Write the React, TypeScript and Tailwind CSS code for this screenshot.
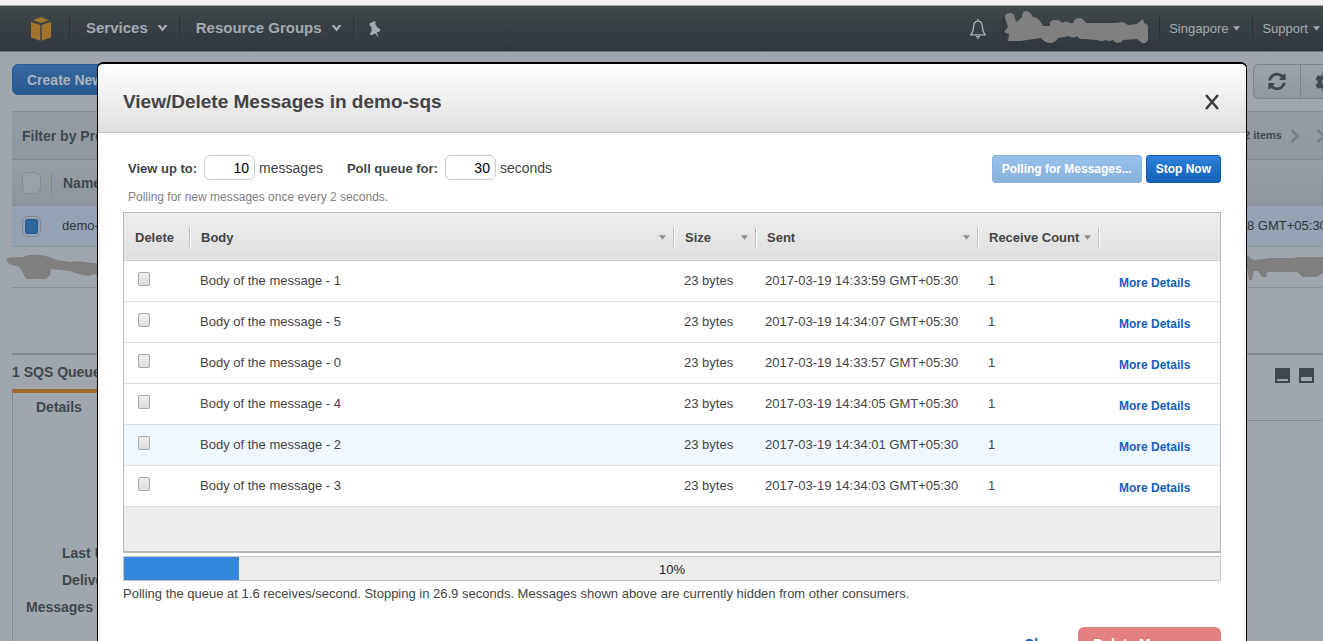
import type { ReactNode } from 'react';
import { FaChevronRight, FaCog, FaSyncAlt } from 'react-icons/fa';

interface Message {
  id: number;
  size: string;
  sent: string;
  count: number;
  active?: boolean;
}

const messages: Message[] = [
  { id: 1, size: '23 bytes', sent: '2017-03-19 14:33:59 GMT+05:30', count: 1 },
  { id: 5, size: '23 bytes', sent: '2017-03-19 14:34:07 GMT+05:30', count: 1 },
  { id: 0, size: '23 bytes', sent: '2017-03-19 14:33:57 GMT+05:30', count: 1 },
  { id: 4, size: '23 bytes', sent: '2017-03-19 14:34:05 GMT+05:30', count: 1 },
  { id: 2, size: '23 bytes', sent: '2017-03-19 14:34:01 GMT+05:30', count: 1, active: true },
  { id: 3, size: '23 bytes', sent: '2017-03-19 14:34:03 GMT+05:30', count: 1 },
];

function Caret({ className = '' }: { className?: string }) {
  return (
    <svg viewBox="0 0 8 5" className={`h-[5px] w-[7px] shrink-0 ${className}`} fill="currentColor">
      <path d="M0 0h8L4 5z" />
    </svg>
  );
}

function ChevronCaret() {
  return (
    <svg viewBox="0 0 9 7" className="h-[7px] w-[9px]" fill="currentColor">
      <path d="M0 0h2.2L4.5 3 6.800 0H9v1L4.500 6.500 0 1z" />
    </svg>
  );
}

function Cube() {
  return (
    <svg viewBox="0 0 20 24" className="h-6 w-5" fill="#a3742c">
      <path d="M10 0l8 3.200L10 6 2 3.200z" />
      <path d="M0 5l9.300 3v15.700L0 20.500z" />
      <path d="M20 5l-9.300 3v15.700l9.300-3.200z" />
    </svg>
  );
}

function Bell() {
  return (
    <svg viewBox="0 0 16 20" className="h-5 w-4" fill="none" stroke="#aab2b8" strokeWidth="1.300">
      <path d="M8 2.200C4.800 2.200 3.700 5 3.600 8c-.1 3.500-.6 5.300-2.800 7.800h14.400C13 13.300 12.500 11.500 12.400 8 12.300 5 11.200 2.200 8 2.200z" />
      <path d="M8 0v2M6 17.600h4M7.200 19.200h1.600" />
    </svg>
  );
}

function Pin() {
  return (
    <svg viewBox="0 0 13 16" className="h-4 w-[13px]" fill="currentColor">
      <path d="M1.500 2.500L6.500 0l1.300 1.200-.6 1.600 2 3.600L12 8l.4 2-3.700 1.800 1.800 3.700-.8.3-2.400-3.400L2.600 14.500l-.4-2L3.600 9.800 3.300 5.400 1.700 4.500z" />
    </svg>
  );
}

function NavSeparator() {
  return <span className="h-6 w-px bg-[#2a3137]" />;
}

function NavBar() {
  return (
    <nav className="flex h-[46px] items-center justify-between border-b border-[#6c747c] bg-linear-to-b from-[#40484b] to-[#30373e] text-[#a3abb1]">
      <div className="flex items-center">
        <a href="#" aria-label="Home" className="pr-[18px] pl-[31px]">
          <Cube />
        </a>
        <NavSeparator />
        <button className="flex items-center gap-[10px] pr-3 pl-4 text-[15px] font-bold">
          Services <ChevronCaret />
        </button>
        <NavSeparator />
        <button className="flex items-center gap-[10px] pr-3 pl-4 text-[15px] font-bold">
          Resource Groups <ChevronCaret />
        </button>
        <NavSeparator />
        <button aria-label="Pin" className="pl-[14px]">
          <Pin />
        </button>
      </div>
      <div className="flex items-center pr-[3px]">
        <button aria-label="Notifications" className="mr-[17px]">
          <Bell />
        </button>
        <NavSeparator />
        {/* account name, scribbled out */}
        <svg viewBox="0 -3 144 36" className="mr-[11px] h-9 w-36" fill="#808080">
          <path d="M1 3Q1-1 6-1t5 6l2 3 5-5Q18-3 22-3t7 6q6 0 10 9l7 0Q45 6 51 6t7 3q4-3 8 0l3 0Q71 4 75 4t7 5l29 0 8-1 5 3 9-1 6-5 1 4q4 1 4 4v13q-2 4-6 3l-5-4-14 1q-2 3-5 3t-5-3q-4 2-7 0-5 2-9 0l-12-1q-5 1-8-3-4 3-8 0l-11 2q-3 5-8 5t-9-5L16 27H4l1-7-5-2 4-5z" />
        </svg>
        <NavSeparator />
        <button className="flex items-center gap-[5px] pr-3 pl-[9px] text-[13px]">
          Singapore <Caret />
        </button>
        <NavSeparator />
        <button className="flex items-center gap-[5px] pl-[9px] text-[13px]">
          Support <Caret />
        </button>
      </div>
    </nav>
  );
}

function QueuesPage() {
  return (
    <div className="text-[#40474e]">
      <div className="flex justify-between pt-3 pl-3">
        <button className="h-[31px] rounded-md border border-[#275c93] bg-linear-to-b from-[#37699f] to-[#28588f] px-[14px] text-sm font-bold text-[#a9b4bd]">
          Create New Queue
        </button>
        <div className="flex h-[35px] rounded-l-md border border-r-0 border-[#7d858c] bg-linear-to-b from-[#9da5ac] to-[#90989f]">
          <button aria-label="Refresh" className="flex w-[47px] items-center justify-center border-r border-[#7d858c]">
            <FaSyncAlt className="h-[19px] w-[18px]" />
          </button>
          <button aria-label="Settings" className="flex w-[22px] items-center overflow-hidden pl-[14px]">
            <FaCog className="h-5 w-5 shrink-0" />
          </button>
        </div>
      </div>
      <div className="ml-3">
        <div className="mt-3 flex h-12 items-center justify-between border-t border-[#858d94] bg-linear-to-b from-[#959da4] to-[#8f979e]">
          <span className="pl-[10px] text-sm font-bold">Filter by Prefix:</span>
          <div className="flex items-center overflow-hidden text-[11px] font-bold">
            2 items
            <FaChevronRight className="ml-[7px] h-4 w-3 text-[#757d85]" />
            <FaChevronRight className="-mr-1 ml-[14px] h-4 w-3 text-[#757d85]" />
          </div>
        </div>
        <div className="flex h-[47px] items-center border-y border-t-[#7f878e] border-b-[#858d94] bg-linear-to-b from-[#99a1a8] to-[#8d959c]">
          <input
            type="checkbox"
            aria-label="Name"
            className="ml-[10px] h-[22px] w-[19px] appearance-none rounded-md border border-[#858c92] bg-[#99a1a8]"
          />
          <span className="mr-[11px] ml-[10px] h-[22px] w-px bg-[#7f878e]" />
          <span className="text-sm font-bold">Name</span>
        </div>
        <div className="flex h-[41px] items-center border-b border-[#8a929a] bg-[#94a2b4] text-[13px] text-[#2f353b]">
          <span className="ml-[10px] flex h-[21px] w-[19px] items-center justify-center rounded-md border border-[#7f8890]">
            <input
              type="checkbox"
              defaultChecked
              aria-labelledby="queue-name"
              className="h-[15px] w-[13px] appearance-none rounded-xs border border-[#275c93] bg-[#2f649c]"
            />
          </span>
          <span id="queue-name" className="ml-[21px] flex-1">demo-sqs</span>
          <span className="w-[76px] overflow-hidden whitespace-nowrap">8 GMT+05:30</span>
        </div>
        <div className="flex h-[41px] items-center justify-between border-b border-[#8a929a]">
          <svg viewBox="0 0 104 26" className="-ml-[6px] h-[26px] w-[104px]" fill="#7f7f7f">
            <path d="M0 5C4 2 12 4 17 3c6-3 18-3 26 0l8 3 13 2c8-1 16 0 22 1h12l6 3v11l-5-2-6 1-5-2-5 2-6-1-5-1-8-3-9-1-10-1-1 6-4 4H20l-3-6-4-6-10-3z" />
          </svg>
          <svg viewBox="0 0 78 30" className="h-[30px] w-[78px]" fill="#7f7f7f">
            <path d="M0 2l3 1 2 3 4 2 8-1 9-1h22l5-1h25v16l-6 4H58l-6-5H22l-1 5h-4l-4-6H9L7 28H4z" />
          </svg>
        </div>
        <div className="mt-[65px] flex h-9 items-center justify-between border-t-2 border-[#82898f] pr-[9px]">
          <h2 className="text-sm font-bold">1 SQS Queue selected</h2>
          <div className="flex gap-[9px] pt-[7px]">
            <button aria-label="Minimize panel" className="flex h-[15px] w-[15px] items-end bg-[#3f474f] p-[2px]">
              <span className="h-[2px] w-full bg-[#9fa6ad]" />
            </button>
            <button aria-label="Split panel" className="flex h-[15px] w-[15px] items-end bg-[#3f474f] p-[2px]">
              <span className="h-1 w-full bg-[#9fa6ad]" />
            </button>
          </div>
        </div>
        <div className="flex h-8 justify-between">
          <span className="w-32 border-t-4 border-l border-t-[#a06a2a] border-l-[#82898f] pt-1 pl-[23px] text-sm font-bold">
            Details
          </span>
          <span className="w-1/2 border-b border-[#82898f]" />
        </div>
        <dl className="flex flex-col gap-[3px] border-l border-[#82898f] pt-[120px] pb-20 text-sm leading-6 font-bold">
          <dt className="pl-[49px]">Last Updated:</dt>
          <dt className="pl-[49px]">Delivery Delay:</dt>
          <dt className="pl-[13px]">Messages Available:</dt>
        </dl>
      </div>
    </div>
  );
}

function HeaderCell({ children, sortable = true }: { children?: ReactNode; sortable?: boolean }) {
  return (
    <th className="p-0 pt-[2px] text-left font-bold">
      <div className="flex h-5 items-center justify-between border-r border-[#bdbdbd] pr-[7px] pl-[11px] shadow-[1px_0_0_#fff]">
        {children}
        {sortable && <Caret className="text-[#8c8c8c]" />}
      </div>
    </th>
  );
}

function MessagesTable() {
  return (
    <div className="border border-b-2 border-[#b8b8b8] bg-[#ededed] pb-11">
      <table className="w-full table-fixed border-collapse text-[13px] text-[#444]">
        <colgroup>
          <col className="w-[66px]" />
          <col />
          <col className="w-[82px]" />
          <col className="w-[222px]" />
          <col className="w-[121px]" />
          <col className="w-[121px]" />
        </colgroup>
        <thead>
          <tr className="h-[47px] border-b border-[#c6c6c6] bg-linear-to-b from-[#eee] to-[#dfdfdf]">
            <HeaderCell sortable={false}>Delete</HeaderCell>
            <HeaderCell>Body</HeaderCell>
            <HeaderCell>Size</HeaderCell>
            <HeaderCell>Sent</HeaderCell>
            <HeaderCell>Receive Count</HeaderCell>
            <th />
          </tr>
        </thead>
        <tbody>
          {messages.map((message) => (
            <tr
              key={message.id}
              className={`h-[41px] border-b border-[#ddd] ${message.active ? 'bg-[#f0f8ff]' : 'bg-white'}`}
            >
              <td className="pb-1 pl-[14px]">
                <input
                  type="checkbox"
                  aria-labelledby={`message-${message.id}`}
                  className="block h-[14px] w-3 appearance-none rounded-xs border border-[#aaa] bg-linear-to-b from-[#eee] to-[#dcdcdc]"
                />
              </td>
              <td id={`message-${message.id}`} className="pl-[10px]">
                Body of the message - {message.id}
              </td>
              <td className="pl-[10px]">{message.size}</td>
              <td className="pl-[9px]">{message.sent}</td>
              <td className="pl-[10px]">{message.count}</td>
              <td className="pt-1 pl-5">
                <a href="#" className="text-xs font-bold text-[#1560bd]">
                  More Details
                </a>
              </td>
            </tr>
          ))}
        </tbody>
      </table>
    </div>
  );
}

function MessagesDialog() {
  const progress = 10.5;

  return (
    <div
      role="dialog"
      aria-labelledby="dialog-title"
      className="min-h-full rounded-t-md border border-t-2 border-black bg-white text-[#444]"
    >
      <header className="flex h-[69px] items-center justify-between rounded-t-md border-b border-[#c6c6c6] bg-linear-to-b from-white to-[#dfdfdf] px-[25px] pt-2">
        <h1 id="dialog-title" className="text-[19px] font-bold">
          View/Delete Messages in demo-sqs
        </h1>
        <button aria-label="Close dialog" className="mr-[2px]">
          <svg viewBox="0 0 14 16" className="h-4 w-[14px]" stroke="#3c3c3c" strokeWidth="2.500">
            <path d="M1 1l12 14M13 1L1 15" />
          </svg>
        </button>
      </header>
      <div className="px-[25px] pt-[22px]">
        <div className="flex h-7 justify-between">
          <div className="flex items-baseline pl-[5px] text-sm">
            <label htmlFor="view-count" className="text-[13px] font-bold">
              View up to:
            </label>
            <input
              id="view-count"
              defaultValue="10"
              className="mr-1 ml-[7px] h-[25px] w-[51px] rounded-md border border-[#ccc] pr-[5px] text-right text-black"
            />
            messages
            <label htmlFor="poll-time" className="ml-6 text-[13px] font-bold">
              Poll queue for:
            </label>
            <input
              id="poll-time"
              defaultValue="30"
              className="mr-1 ml-[7px] h-[25px] w-[51px] rounded-md border border-[#ccc] pr-[5px] text-right text-black"
            />
            seconds
          </div>
          <div className="flex gap-1 text-xs font-bold text-white">
            <button
              disabled
              className="h-7 rounded-[3px] border border-[#8ab3df] bg-linear-to-b from-[#98c2ec] to-[#88b0dc] px-[9px]"
            >
              Polling for Messages...
            </button>
            <button className="h-7 rounded-[3px] border border-[#1260b4] bg-linear-to-b from-[#2d82d9] to-[#1161b8] px-[9px]">
              Stop Now
            </button>
          </div>
        </div>
        <p className="pt-[6px] pb-[7px] pl-[5px] text-xs text-[#808080]">
          Polling for new messages once every 2 seconds.
        </p>
        <MessagesTable />
        <div
          role="progressbar"
          aria-valuenow={10}
          className="relative mt-[3px] h-[25px] border border-[#c6c6c6] bg-[#ededed]"
        >
          <div className="h-full bg-[#3388dd]" style={{ width: `${progress}%` }} />
          <span className="absolute inset-0 flex items-center justify-center pt-1 text-[13px] text-[#222]">10%</span>
        </div>
        <p className="pt-[3px] text-[13px] leading-5">
          Polling the queue at 1.6 receives/second. Stopping in 26.9 seconds. Messages shown above are currently hidden
          from other consumers.
        </p>
        <div className="mt-[23px] flex items-center justify-end gap-4 text-sm font-bold">
          <button className="text-[#1560bd]">Close</button>
          <button disabled className="h-[34px] rounded-md bg-[#e48080] px-[15px] text-white">
            Delete Messages
          </button>
        </div>
      </div>
    </div>
  );
}

export default function App() {
  return (
    <div className="h-screen overflow-hidden bg-[#9fa6ad] font-['Liberation_Sans',Arial,sans-serif]">
      <div className="h-[6px] border-b border-[#aaa] bg-[#f1f1f1]" />
      <NavBar />
      <QueuesPage />
      <div className="fixed inset-0 overflow-hidden pt-[62px] pr-[76px] pl-[97px]">
        <MessagesDialog />
      </div>
    </div>
  );
}
